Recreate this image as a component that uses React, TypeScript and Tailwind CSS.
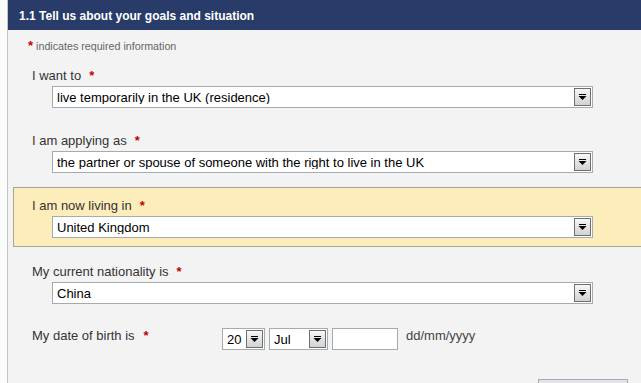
import React from "react";

function DropButton() {
    return (
        <div className="w-[17px] h-[18px] border border-[#6f6f6f] bg-gradient-to-b from-[#f7f7f7] to-[#d2d2d2] flex items-center justify-center shrink-0">
            <svg width="9" height="6" viewBox="0 0 9 6">
                <rect x="1" y="0" width="7" height="1" fill="#000" />
                <polygon points="0.5,2 8.5,2 4.5,6" fill="#000" />
            </svg>
        </div>
    );
}

function Select({ value, width }: { value: string; width: string }) {
    return (
        <div className={"h-[22px] border border-[#a3abb3] bg-white flex items-center pl-[4px] pr-[1px] " + width}>
            <span className="flex-1 text-[13px] text-black leading-none truncate">{value}</span>
            <DropButton />
        </div>
    );
}

function Star({ gap }: { gap: string }) {
    return <span className={"text-[#c00000] font-bold text-[13px] " + gap}>*</span>;
}

function Field({ label, value }: { label: string; value: string }) {
    return (
        <div className="pl-[24px]">
            <div className="h-[16px] leading-[16px] text-[13px] text-[#333]">
                {label}
                <Star gap="ml-[8px]" />
            </div>
            <div className="mt-[2px] ml-[20px]">
                <Select value={value} width="w-[541px]" />
            </div>
        </div>
    );
}

export default function App() {
    return (
        <div className="w-[641px] h-[383px] bg-[#fbfbfb] pl-[7px] overflow-hidden font-['Liberation_Sans',Arial,sans-serif]">
            <div className="h-full border-l border-[#c4c4c4] bg-[#f3f3f3]">
                <div className="h-[30px] bg-[#283b69] text-white font-bold text-[12px] flex items-center pl-[11px] pt-[1px]">
                    1.1 Tell us about your goals and situation
                </div>

                <div className="pl-[20px] pt-[9px] h-[38px] text-[10.7px] text-[#666] leading-[14px]">
                    <span className="text-[#c00000] font-bold text-[13px] mr-[3px]">*</span>
                    indicates required information
                </div>

                <Field label="I want to" value="live temporarily in the UK (residence)" />

                <div className="mt-[25px]">
                    <Field label="I am applying as" value="the partner or spouse of someone with the right to live in the UK" />
                </div>

                <div className="mt-[14px] ml-[5px] border border-r-0 border-[#a3a3a3] bg-[#fdedba] pt-[10px] pb-[8px] -mr-[2px]">
                    <div className="-ml-[6px]">
                        <Field label="I am now living in" value="United Kingdom" />
                    </div>
                </div>

                <div className="mt-[17px]">
                    <Field label="My current nationality is" value="China" />
                </div>

                <div className="mt-[24px] pl-[24px] flex items-start">
                    <div className="w-[190px] h-[16px] leading-[16px] text-[13px] text-[#333]">
                        My date of birth is
                        <Star gap="ml-[9px]" />
                    </div>
                    <Select value="20" width="w-[43px]" />
                    <div className="ml-[4px]">
                        <Select value="Jul" width="w-[59px]" />
                    </div>
                    <div className="ml-[4px] w-[66px] h-[22px] border border-[#a3abb3] bg-white" />
                    <div className="ml-[8px] h-[16px] leading-[16px] text-[13px] text-[#444]">dd/mm/yyyy</div>
                </div>

                <div className="mt-[29px] flex justify-end pr-[13px]">
                    <div className="w-[90px] h-[24px] border border-[#a7a7b7] bg-[#e3e3ea]" />
                </div>
            </div>
        </div>
    );
}
